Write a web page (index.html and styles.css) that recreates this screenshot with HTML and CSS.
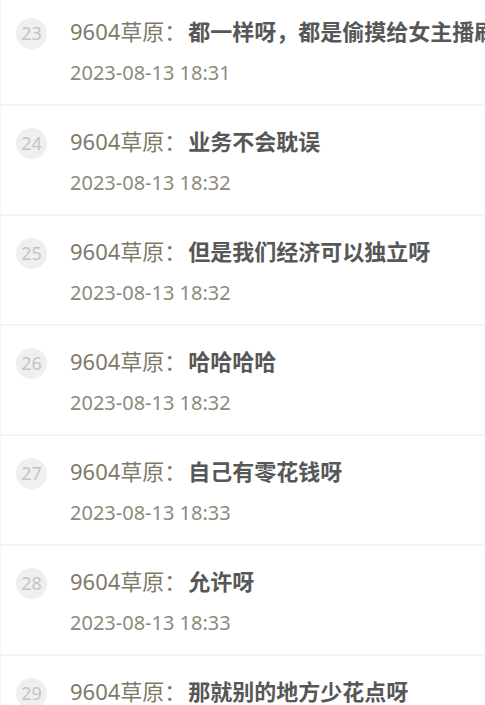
FILE: index.html
```html
<!DOCTYPE html>
<html lang="zh-CN">
<head>
    <meta charset="UTF-8">
    <meta name="viewport" content="width=device-width, initial-scale=1.0">
    <title>弹幕记录</title>
    <link rel="stylesheet" href="styles.css">
</head>
<body>
    <ul class="msg-list">
        <li class="msg">
            <span class="msg-index">23</span>
            <div class="msg-body">
                <p class="msg-line"><span class="msg-user">9604草原：</span><b class="msg-text">都一样呀，都是偷摸给女主播刷礼物</b></p>
                <p class="msg-time">2023-08-13 18:31</p>
            </div>
        </li>
        <li class="msg">
            <span class="msg-index">24</span>
            <div class="msg-body">
                <p class="msg-line"><span class="msg-user">9604草原：</span><b class="msg-text">业务不会耽误</b></p>
                <p class="msg-time">2023-08-13 18:32</p>
            </div>
        </li>
        <li class="msg">
            <span class="msg-index">25</span>
            <div class="msg-body">
                <p class="msg-line"><span class="msg-user">9604草原：</span><b class="msg-text">但是我们经济可以独立呀</b></p>
                <p class="msg-time">2023-08-13 18:32</p>
            </div>
        </li>
        <li class="msg">
            <span class="msg-index">26</span>
            <div class="msg-body">
                <p class="msg-line"><span class="msg-user">9604草原：</span><b class="msg-text">哈哈哈哈</b></p>
                <p class="msg-time">2023-08-13 18:32</p>
            </div>
        </li>
        <li class="msg">
            <span class="msg-index">27</span>
            <div class="msg-body">
                <p class="msg-line"><span class="msg-user">9604草原：</span><b class="msg-text">自己有零花钱呀</b></p>
                <p class="msg-time">2023-08-13 18:33</p>
            </div>
        </li>
        <li class="msg">
            <span class="msg-index">28</span>
            <div class="msg-body">
                <p class="msg-line"><span class="msg-user">9604草原：</span><b class="msg-text">允许呀</b></p>
                <p class="msg-time">2023-08-13 18:33</p>
            </div>
        </li>
        <li class="msg">
            <span class="msg-index">29</span>
            <div class="msg-body">
                <p class="msg-line"><span class="msg-user">9604草原：</span><b class="msg-text">那就别的地方少花点呀</b></p>
                <p class="msg-time">2023-08-13 18:33</p>
            </div>
        </li>
    </ul>
</body>
</html>
```

FILE: styles.css
```css
:root {
    --user-color: #7d7a69;
    --time-color: #8d8a7a;
    --text-color: #575757;
    --line-color: #f4f4f4;
}
body {
    font-family: 'Noto Sans', 'Noto Sans CJK SC', sans-serif;
    background-color: #ffffff;
    margin: 0;
    padding: 0;
    overflow: hidden;
}
.msg-list {
    list-style: none;
    margin: -4px 0 0 0;
    padding: 0;
    border-left: 1px solid #f7f7f7;
}
.msg {
    display: flex;
    align-items: flex-start;
    height: 108px;
    border-bottom: 2px solid var(--line-color);
}
.msg-index {
    flex: none;
    width: 31px;
    height: 31px;
    margin: 22px 23px 0 15px;
    border-radius: 50%;
    background-color: #efefef;
    color: #c4c4c4;
    font-size: 18px;
    line-height: 31px;
    text-align: center;
}
.msg-body {
    flex: 1;
    min-width: 0;
    padding-top: 20px;
}
.msg-line {
    margin: 0;
    font-size: 22px;
    line-height: 30px;
    white-space: nowrap;
    overflow: hidden;
}
.msg-user {
    color: var(--user-color);
    margin-right: 2px;
}
.msg-text {
    color: var(--text-color);
    font-weight: bold;
}
.msg-time {
    margin: 15px 0 0 0;
    font-size: 20px;
    line-height: 24px;
    color: var(--time-color);
}
```
